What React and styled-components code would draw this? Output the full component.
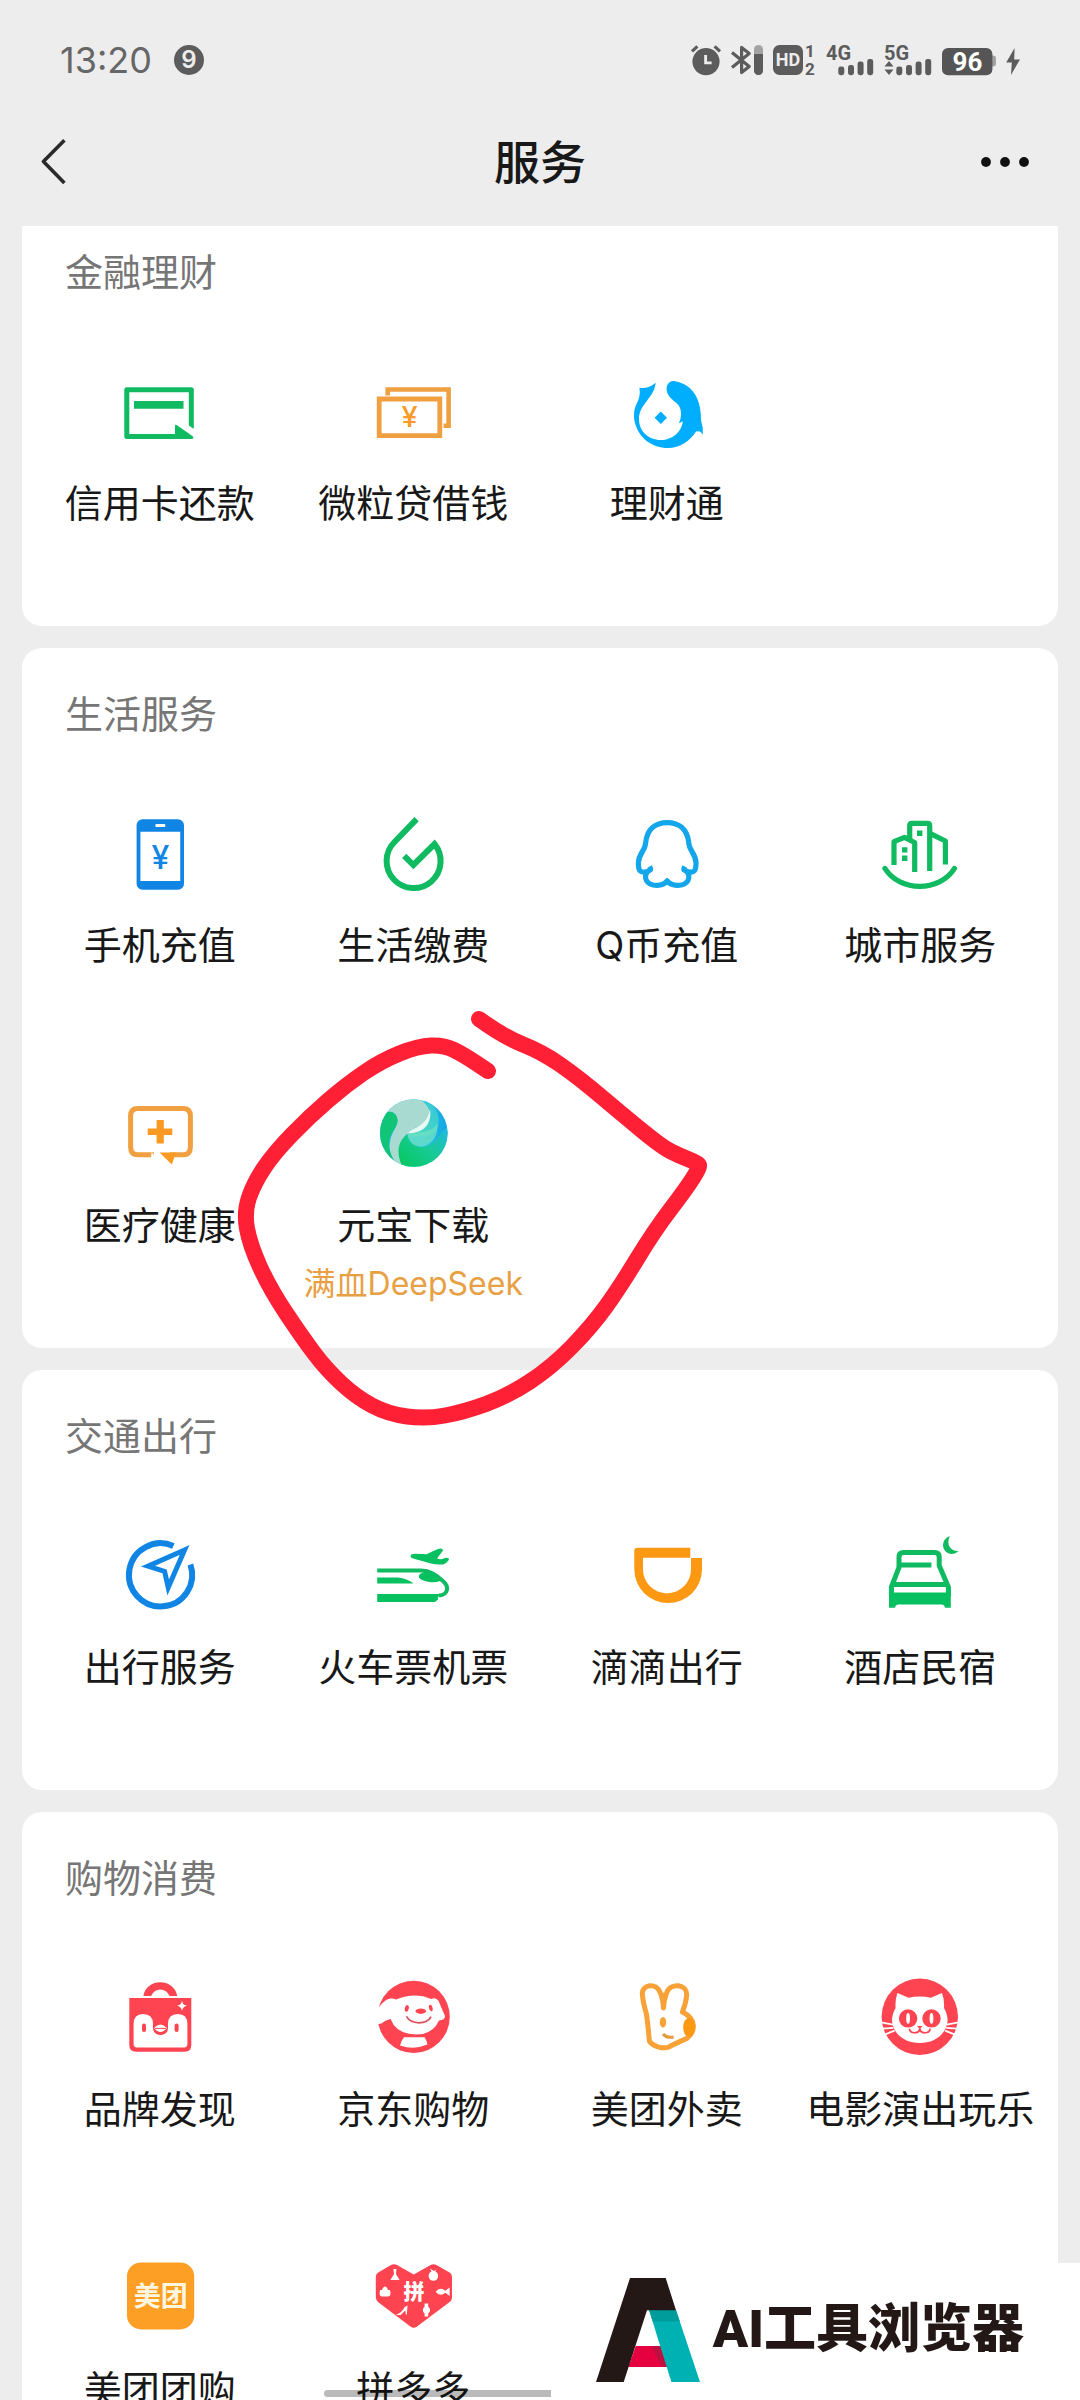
import React from 'react'
import styled, { createGlobalStyle } from 'styled-components'

const GREEN = '#0fba60'
const ORANGE = '#f0a040'
const BLUE = '#1085e4'
const RED = '#fd4450'
const GREY = '#5c5c5c'

const GlobalStyle = createGlobalStyle`
  * {
    box-sizing: border-box;
  }
  body {
    margin: 0;
    background: #ededed;
    font-family: Inter, "Noto Sans CJK SC", sans-serif;
    color: #181818;
  }
  h1, h2, ul {
    margin: 0;
    padding: 0;
  }
`

const Screen = styled.div`
  height: 100vh;
  overflow: hidden;
  display: flex;
  flex-direction: column;
`

const Header = styled.header`
  position: relative;
  z-index: 1;
  flex: none;
  background: #ededed;
`

const StatusBar = styled.div`
  display: flex;
  align-items: center;
  justify-content: space-between;
  height: 98px;
  padding: 22px 60px 0;
  color: ${GREY};
`

const StatusGroup = styled.div`
  display: flex;
  align-items: center;
  gap: ${(props) => props.$gap}px;
  svg {
    display: block;
    overflow: visible;
  }
`

const Clock = styled.time`
  font-size: 36px;
  line-height: 44px;
  color: #666;
`

const Count = styled.span`
  width: 30px;
  height: 30px;
  border-radius: 50%;
  background: ${GREY};
  color: #ededed;
  font-size: 24px;
  font-weight: 600;
  line-height: 30px;
  text-align: center;
`

const NavBar = styled.nav`
  display: grid;
  grid-template-columns: 1fr auto 1fr;
  align-items: center;
  height: 128px;
  padding: 0 40px;
`

const NavButton = styled.button`
  display: flex;
  justify-self: ${(props) => props.$side};
  padding: 0;
  border: 0;
  background: none;
  cursor: pointer;
`

const Title = styled.h1`
  font-size: 46px;
  font-weight: 500;
  line-height: 60px;
`

const List = styled.main`
  display: flex;
  flex-direction: column;
  gap: 22px;
  margin-top: -20px;
  padding: 0 22px;
`

const Card = styled.section`
  flex: none;
  padding: 40px 11px 0;
  border-radius: 20px;
  background: #fff;
`

const CardTitle = styled.h2`
  margin: 0 32px 48px;
  font-size: 38px;
  font-weight: 400;
  line-height: 52px;
  color: #767676;
`

const Grid = styled.ul`
  display: grid;
  grid-template-columns: repeat(4, 1fr);
  list-style: none;
`

const Cell = styled.li`
  position: relative;
  height: 280px;
  padding-top: 24px;
`

const Service = styled.a`
  display: flex;
  flex-direction: column;
  align-items: center;
  color: inherit;
  text-decoration: none;
  white-space: nowrap;
`

const Icon = styled.svg`
  width: 80px;
  height: 80px;
  margin-bottom: 27px;
  overflow: visible;
`

const Label = styled.span`
  font-size: 38px;
  line-height: 52px;
`

const Note = styled.span`
  margin-top: 11px;
  font-size: 32px;
  line-height: 44px;
  color: #e8a044;
`

const Scribble = styled.svg`
  position: absolute;
  top: -63px;
  left: 50%;
  width: 480px;
  height: 425px;
  margin-left: -183px;
  pointer-events: none;
`

const HomeIndicator = styled.div`
  position: fixed;
  bottom: 3px;
  left: 30%;
  width: 40%;
  height: 7px;
  border-radius: 4px;
  background: rgba(0, 0, 0, 0.27);
`

const Watermark = styled.footer`
  position: fixed;
  right: 0;
  bottom: 0;
  display: flex;
  align-items: center;
  gap: 13px;
  width: 49%;
  height: 137px;
  padding: 0 0 3px 45px;
  background: #fff;
`

const Brand = styled.span`
  font-family: Roboto, "Noto Sans CJK SC", sans-serif;
  font-size: 52px;
  font-weight: 900;
  line-height: 60px;
  color: #231815;
  white-space: nowrap;
`

const CreditCard = () => (
  <>
    <path d="M71.3 58.5 V19.8 H6.8 V66.5 H60" fill="none" stroke={GREEN} strokeWidth="5" strokeLinejoin="round" />
    <path d="M14 31 H63.5 V38.7 H14Z" fill={GREEN} />
    <path d="M55 69 V56 Q55 54 57 55.2 L72.4 66 Q75 69 71 69Z" fill={GREEN} />
    <path d="M67 54 L76 61 V64 L66 57Z" fill="#fff" />
  </>
)

const Loan = () => (
  <>
    <path d="M14.7 25.5 V19.5 H75.6 V55.8 H70.5" fill="none" stroke={ORANGE} strokeWidth="4.6" />
    <path d="M6.2 29 H66.8 V65.7 H6.2Z" fill="none" stroke={ORANGE} strokeWidth="4.8" />
    <text x="36.5" y="57" fill="#fa9b28" fontFamily="Inter" fontSize="29" fontWeight="500" textAnchor="middle">¥</text>
  </>
)

const Wealth = () => (
  <>
    <path
      d="M28.6 12.7 Q22 18.8 12.4 17.8 Q14 26 9.5 34 C6.5 40 6.5 48 8 53 C12 68 25 78 41 78 C53 78 63 71 69 61.5 Q74 60 75.8 65 Q76.5 58 74 50 C74.5 30 66 14 48 11.2 C40 10 37 19 42 26 C46 32 54 33 54 43 Q54 50 51.7 52.7 Q54 53 55.8 51 C55 62 45 70 34 70 C21 70 12 61 12 49 C12 34 28 27 28.6 12.7Z"
      fill="#00aefd"
    />
    <path d="M33.8 41.5 L40 47.7 L33.8 54 L27.6 47.7Z" fill="#00aefd" />
  </>
)

const Phone = () => (
  <>
    <rect x="16.6" y="7.3" width="47.4" height="70.4" rx="6" fill={BLUE} />
    <path d="M20.4 19.7 H60.2 V69 H20.4Z" fill="#fff" />
    <rect x="35.3" y="12" width="10" height="3" rx="1" fill="#fff" />
    <text x="40.3" y="57" fill={BLUE} fontFamily="Inter" fontSize="32" fontWeight="500" textAnchor="middle">¥</text>
  </>
)

const Drop = () => (
  <path d="M43.6 7.2 L21.5 30 A27 27 0 1 0 61.5 32 L40.4 53 L31.2 43.8" fill="none" stroke={GREEN} strokeWidth="6" />
)

const Penguin = () => (
  <g fill="none" stroke="#14a6ea" strokeWidth="5.2" strokeLinejoin="round">
    <path d="M22.6 54.5 Q24 57 23.4 58 C11.4 64 11.4 56 11.4 51 C11.6 41 18.4 39 18.6 31 C20 17 28.5 10.6 40.2 10.6 C52 10.6 60.4 17 61.8 31 C62 39 68.8 41 69 51 C69 56 69 64 57 58 Q56.4 57 57.8 54.5" />
    <path d="M21.6 58.5 C15.4 65 19 73.4 30 73.4 Q37 73 40.2 68.8 Q43.4 73 50.4 73.4 C61.4 73.4 65 65 58.8 58.5" />
  </g>
)

const City = () => (
  <>
    <g fill="none" stroke={GREEN} strokeWidth="5.2" strokeLinejoin="round">
      <path d="M14 53 V29.7 L24.5 25.4 L34.7 30.5 V60" />
      <path d="M29.7 27 V13.5 Q29.7 11.3 32 11.3 H47.4 Q49.7 11.3 49.7 13.5 V59" />
      <path d="M51 21.8 L65.4 29 V52.5" />
      <path d="M4.9 56.4 C20 80.4 59.5 80.4 74.5 56.4" strokeLinecap="round" />
    </g>
    <path d="M37 18.5 H42.4 V24 H37Z M22 35.3 H27.4 V40.6 H22Z M22 43.6 H27.4 V49 H22Z" fill={GREEN} />
  </>
)

const Medical = () => (
  <>
    <path d="M34 62.8 H18 Q10.6 62.8 10.6 55 V24 Q10.6 16.6 18 16.6 H63 Q70.4 16.6 70.4 24 V55 Q70.4 62.8 63 62.8 H50" fill="none" stroke={ORANGE} strokeWidth="5" />
    <path d="M31.5 60 L36.5 66 H31Z" fill="#fff" />
    <path d="M39.5 60.4 H56 L51.8 72.6Z M36.6 28 H43.8 V36.4 H52.3 V43 H43.8 V51.4 H36.6 V43 H27.7 V36.4 H36.6Z" fill="#fb9a22" />
  </>
)

const Yuanbao = () => (
  <>
    <defs>
      <clipPath id="yb-clip"><circle cx="40.8" cy="41" r="33.8" /></clipPath>
      <linearGradient id="yb-base" x1="0" y1="0" x2="1" y2="0">
        <stop offset="0" stopColor="#16b4e4" />
        <stop offset="0.6" stopColor="#2cc5de" />
        <stop offset="1" stopColor="#0d9fe8" />
      </linearGradient>
      <linearGradient id="yb-bottom" x1="0.1" y1="0.9" x2="1" y2="0.1">
        <stop offset="0" stopColor="#07c660" />
        <stop offset="0.5" stopColor="#17cb94" />
        <stop offset="1" stopColor="#22b8e0" />
      </linearGradient>
      <linearGradient id="yb-light" x1="0" y1="1" x2="1" y2="0">
        <stop offset="0" stopColor="#4fdcb4" />
        <stop offset="1" stopColor="#35c6dc" />
      </linearGradient>
    </defs>
    <g clipPath="url(#yb-clip)">
      <path d="M0 0 H80 V80 H0Z" fill="url(#yb-base)" />
      <path d="M10 10 C30 -4 54 6 57 20 C58 34 38 34 35 42 C25 50 24 62 34 78 C22 76 14 62 17 50 C18 40 26 34 24 26 C22 18 14 18 8 24Z" fill="#a9dad2" />
      <path d="M6 28 C10 16 24 18 24.6 28 C25 36 16 40 16 51 C16 60 20 68 25 73 C12 66 4 50 6 28Z" fill="#10c478" />
      <path d="M52 8 C64 13 68 26 64.5 36 C60 48 42 42 34.5 46 C36 34 56 36 57 20Z" fill="url(#yb-light)" />
      <path d="M57 17 C59 30 53 41 35 41.4 C38 35 54 36 57 17Z" fill="#e8f8f3" />
      <path d="M34 42 C36 54 50 60 61 50 C68 43 72 34 78 34 V80 H32 C24 66 22 52 34 42Z" fill="url(#yb-bottom)" />
      <path d="M35 42 C42 40 58 42 64 32 C66 44 58 54 48 54.6 C40 54.6 35 49 35 42Z" fill="#6fe0c4" opacity="0.75" />
    </g>
  </>
)

const Navigate = () => (
  <g fill="none" stroke={BLUE}>
    <path d="M53.4 12 A31.6 31.6 0 1 0 70.4 30.5" strokeWidth="6" />
    <path d="M64.6 16 L28 32.2 L44.6 37.4 L48.2 53.4Z" strokeWidth="5" strokeMiterlimit="8" />
  </g>
)

const Train = () => (
  <>
    <path d="M37.6 22 Q38 19.8 42 19.8 L53.6 20.2 Q60 17 65 15 Q70 13.6 70 16.6 L64 24.4 Q68 26 71 24.2 Q76.6 23 75.8 26 Q73.6 29.6 70 30.4 Q64 31 58 29.6 L41 24.8 Q37.4 24 37.6 22Z" fill="#07c160" />
    <path d="M4.2 36.4 H48 C58 36.4 64 42 69.4 46.6 C77 53 75 60.6 66 61.6" fill="none" stroke={GREEN} strokeWidth="4" />
    <path d="M46 43.4 Q45.4 40 49 39 L58 38.4 L68 46.4 Q62 49.4 55 47.8 Q48 46.4 46 43.4Z M4.2 43.4 H25 Q34 44.4 40.6 49.6 H4.2Z M4.2 60 H69 Q64 62 65 65.6 L62 68 H4.2Z" fill="#07c160" />
  </>
)

const Didi = () => (
  <path d="M10.4 13.7 H63.3 V23.7 H16 V35.4 A24 24 0 0 0 64 35.4 V24 H75 V35.2 A33.8 33.8 0 0 1 7.3 35.2 V16.6 Q7.3 13.7 10.4 13.7Z" fill="#fd9813" />
)

const Hotel = () => (
  <>
    <g fill="none" stroke={GREEN} strokeWidth="5" strokeLinejoin="round">
      <path d="M11.4 62 V53 L19 33.4 V23 Q19 18.6 23.6 18.6 H54.6 Q59.2 18.6 59.2 23 V31.4 L68.4 53 V62" />
      <path d="M20 31 H51.4 M13 50.6 H67" />
    </g>
    <path d="M9 54 H14 L13.6 58.6 H66.4 L66 54 H70.8 V73.8 H65 Q64.6 70.6 61 70.6 H19 Q15.4 70.6 15 73.8 H9Z" fill="#07c160" />
    <path d="M69.8 2 C66 10 70 17.4 78.6 17 C72 23.4 63 18.6 63 11 Q63.4 4.6 69.8 2Z" fill={GREEN} />
  </>
)

const Bag = () => (
  <>
    <path d="M23.4 20 C26 1.6 54.4 1.6 57.2 20 H49.6 Q46.6 13.4 40.3 13.4 Q34 13.4 31 20Z M9.3 22 H71.3 V69 Q71.3 75.8 64.6 75.8 H16 Q9.3 75.8 9.3 69Z" fill={RED} />
    <path d="M13.6 48 Q13.6 38 23 38 Q33 38 33 48 V52 C33 61.4 48 61.4 48 52 V48 Q48 38 58 38 Q67.4 38 67.4 48 V68 Q67.4 71.4 64 71.4 H17 Q13.6 71.4 13.6 68Z M62 24.4 Q62.6 29 67.2 29.7 Q62.6 30.4 62 35 Q61.4 30.4 56.8 29.7 Q61.4 29 62 24.4Z" fill="#fff" />
    <path d="M34 52 Q40.4 45 47 52 Q40.4 60 34 52Z" fill="#fff" />
    <path d="M35 52.4 H46" stroke={RED} strokeWidth="1" />
    <rect x="22" y="47.6" width="4" height="8.4" rx="2" fill={RED} />
    <rect x="54.6" y="47.6" width="4" height="8.4" rx="2" fill={RED} />
  </>
)

const Dog = () => (
  <>
    <circle cx="40.7" cy="40.8" r="36.1" fill={RED} />
    <path d="M3 36 Q10 24 17 22.6 Q20 22 23 23.4 Q42 16 58 23 Q63 20.6 65.6 25 L72 40 Q72 44 66 44.6 Q60 58.6 43 58.6 Q23 58 17.6 43 Q12 44 8.4 47.6 L3.6 48.6Z" fill="#fff" />
    <path d="M31 61.2 H51.6 Q54 65 54.4 68.6 Q41 74.4 27 69.4 Q28 65 31 61.2Z" fill="#fff" />
    <ellipse cx="33.8" cy="32.4" rx="2" ry="3.3" transform="rotate(12 33.8 32.4)" fill={RED} />
    <ellipse cx="57.8" cy="32" rx="1.8" ry="3.3" transform="rotate(-12 57.8 32)" fill={RED} />
    <ellipse cx="47.8" cy="35.2" rx="5.2" ry="2.7" fill={RED} />
    <path d="M33.4 40.4 Q37 46.6 45.8 46.8 Q55 46.6 58 40.6" fill="none" stroke="#d9525c" strokeWidth="1.8" />
  </>
)

const Rabbit = () => (
  <>
    <path
      d="M15.4 19 C14 8 30 6 33.4 17 Q36.6 26 36.4 32 Q37 24 39.6 17 C43 6 61 8 59.6 19.6 Q59 27 55.4 36 C68 42 70 54 60 62.4 C54 65 46 68.6 42 71 C36 73.4 25 70 22.4 65 C21.4 56 21 48 19.4 38 Q16 26 15.4 19Z"
      fill="none" stroke="#f7a136" strokeWidth="5" strokeLinejoin="round"
    />
    <path d="M36.4 16 L39 20 V30 L36.4 34 L34 28Z" fill="#f7a136" />
    <ellipse cx="62" cy="51.4" rx="5.8" ry="9.6" fill="#fd9813" />
    <ellipse cx="36" cy="46.3" rx="3.2" ry="5.2" fill="#f7a136" />
    <path d="M36 58 Q39.6 62.4 46.6 61" fill="none" stroke="#e59a3c" strokeWidth="3" />
  </>
)

const Cat = () => (
  <>
    <circle cx="39.8" cy="40.8" r="38.2" fill={RED} />
    <path d="M17.4 17 L28.6 21.8 Q40 19.4 50.8 21.8 L62 17 Q64.6 24 64 32 Q67.6 38 67.6 45 C66 59 54 67 39.8 67 C25.6 67 13.4 59 12 45 Q12 38 15.6 32 Q15 24 17.4 17Z" fill="#fff" />
    <path d="M1 46.4 L13 48.6 M2 52.6 L13.4 51.8 M4.6 58.6 L14.6 54.6 M78.6 46.4 L66.6 48.6 M77.6 52.6 L66.2 51.8 M75 58.6 L65 54.6" stroke="#fff" strokeWidth="1.8" />
    <circle cx="28.1" cy="42.4" r="9.2" fill={RED} />
    <circle cx="51.5" cy="42.4" r="9.2" fill={RED} />
    <ellipse cx="28.1" cy="42.4" rx="1.9" ry="5.4" fill="#fff" />
    <ellipse cx="51.5" cy="42.4" rx="1.9" ry="5.4" fill="#fff" />
    <path d="M37 50 H42.6 L39.8 53Z" fill={RED} />
    <path d="M29.4 52.6 C30 58 39.4 58.4 39.8 52.4 C40.2 58.4 49.6 58 50.2 52.6" fill="none" stroke={RED} strokeWidth="1.7" />
  </>
)

const Meituan = () => (
  <>
    <rect x="7" y="6.4" width="67.2" height="67" rx="14" fill="#fd9f24" />
    <text x="40.7" y="50" fill="#fff6df" fontFamily="Noto Sans CJK SC" fontSize="27" fontWeight="700" textAnchor="middle">美团</text>
  </>
)

const Pinduoduo = () => (
  <>
    <path d="M18 9 Q21 7.4 24 9 L40.7 18.4 L57.6 9 Q60.4 7.4 63.4 9 L76.6 16.6 Q79 18 79 21 V41 Q79 44.6 76 46.6 L44 70.4 Q40.7 73 37.4 70.4 L5.6 46.6 Q2.8 44.6 2.8 41 V21 Q2.8 18 5.2 16.6Z" fill={RED} />
    <text x="41" y="43" fill="#fff" fontFamily="Noto Sans CJK SC" fontSize="21" fontWeight="900" textAnchor="middle">拼</text>
    <g fill="#fff">
      <path d="M20.4 13 H23.4 L23 18 L26.6 24 H17.4 L21 18Z" />
      <circle cx="60.4" cy="20" r="4.8" />
      <path d="M57 12.6 L61 15 L63 13.4 L62 16.4 H59Z" />
      <path d="M7 34 H9 Q10 30.4 12 30.4 Q14 30.4 15 34 H17 Q18.6 40.4 15 40.6 H9 Q5.6 40.4 7 34Z" />
      <path d="M62.6 35.8 Q67 30.4 72.4 34.8 L76.6 31.6 V40 L72.4 36.8 Q67 41.2 62.6 35.8Z" />
      <path d="M34.6 49.6 L33.8 58.6 H32.8 L32.4 54.4 L27.6 59 H22.8 Q29.6 56 31.6 51Z" />
      <path d="M51.6 47.4 H55.2 V50.4 Q59 54 55.2 57.6 V60.6 H51.6 V57.6 Q48 54 51.6 50.4Z" />
    </g>
  </>
)

const sections = [
  {
    title: '金融理财',
    items: [
      { name: '信用卡还款', icon: CreditCard },
      { name: '微粒贷借钱', icon: Loan },
      { name: '理财通', icon: Wealth },
    ],
  },
  {
    title: '生活服务',
    items: [
      { name: '手机充值', icon: Phone },
      { name: '生活缴费', icon: Drop },
      { name: 'Q币充值', icon: Penguin },
      { name: '城市服务', icon: City },
      { name: '医疗健康', icon: Medical },
      { name: '元宝下载', icon: Yuanbao, note: '满血DeepSeek', circled: true },
    ],
  },
  {
    title: '交通出行',
    items: [
      { name: '出行服务', icon: Navigate },
      { name: '火车票机票', icon: Train },
      { name: '滴滴出行', icon: Didi },
      { name: '酒店民宿', icon: Hotel },
    ],
  },
  {
    title: '购物消费',
    items: [
      { name: '品牌发现', icon: Bag },
      { name: '京东购物', icon: Dog },
      { name: '美团外卖', icon: Rabbit },
      { name: '电影演出玩乐', icon: Cat },
      { name: '美团团购', icon: Meituan },
      { name: '拼多多', icon: Pinduoduo },
    ],
  },
]

const strokePoints = [
  [249, 14], [274, 32], [312, 47], [348, 72], [393, 110], [432, 142], [450, 151],
  [468, 158], [470, 162], [456, 184], [424, 226], [390, 282], [362, 321], [322, 362],
  [278, 391], [234, 407], [196, 414], [158, 409], [126, 392], [96, 364], [72, 332],
  [40, 284], [20, 240], [14, 207], [24, 178], [44, 148], [80, 111], [116, 80],
  [151, 56], [188, 41], [214, 40], [234, 50], [258, 66],
]

// runs a quadratic curve through the midpoints, so the line has no kinks
const smoothPath = (points) => {
  const [first, ...rest] = points
  const last = rest[rest.length - 1]
  const curves = rest.slice(0, -1).map(([x, y], i) => {
    const [nx, ny] = rest[i + 1]
    return `Q${x} ${y} ${(x + nx) / 2} ${(y + ny) / 2}`
  })
  return `M${first.join(' ')} ${curves.join(' ')} L${last.join(' ')}`
}

const HandDrawnCircle = () => (
  <Scribble viewBox="0 0 480 425" aria-hidden="true">
    <path
      d={smoothPath(strokePoints)}
      fill="none" stroke="#ff2036" strokeWidth="16" strokeLinecap="round" strokeLinejoin="round"
    />
  </Scribble>
)

const Signal = ({ label, arrows }) => (
  <svg width="48" height="32" viewBox="0 0 48 32" fill={GREY}>
    <text x="0" y="16" fontFamily="Roboto" fontSize="20" fontWeight="700">{label}</text>
    <rect x="12.3" y="22.6" width="6" height="8.6" rx="2.4" />
    <rect x="22" y="21" width="6" height="10.2" rx="2.4" />
    <rect x="31.6" y="17.6" width="6" height="13.6" rx="2.4" />
    <rect x="41.2" y="15" width="6" height="16.2" rx="2.4" />
    {arrows && <path d="M0.5 22.6 L5 17 L9.5 22.6Z M0.5 25.4 H9.5 L5 31Z" />}
  </svg>
)

const StatusIcons = () => (
  <StatusGroup $gap={10}>
    <svg width="30" height="32" viewBox="0 0 30 32" fill={GREY}>
      <circle cx="15" cy="17.6" r="13.6" />
      <path d="M1 7.4 L6.4 2.4 M29 7.4 L23.6 2.4" stroke={GREY} strokeWidth="3.2" />
      <path d="M14.6 11 V18.8 H20.6" fill="none" stroke="#ededed" strokeWidth="2.8" />
    </svg>
    <svg width="32" height="32" viewBox="0 0 32 32">
      <path d="M1 8.4 L18.2 22.4 L10.6 28.6 V3.4 L18.2 9.6 L1 23.6" fill="none" stroke={GREY} strokeWidth="3.2" strokeLinejoin="round" />
      <rect x="23" y="1" width="9" height="30" rx="4.5" fill="#a2a2a2" />
      <path d="M23 10 H32 V26.5 A4.5 4.5 0 0 1 23 26.5Z" fill={GREY} />
    </svg>
    <svg width="43" height="32" viewBox="0 0 43 32" fill={GREY}>
      <rect x="0" y="1" width="30" height="30" rx="6.5" />
      <text x="15" y="22.4" fill="#ededed" fontFamily="Roboto" fontSize="18" fontWeight="700" textAnchor="middle">HD</text>
      <text x="37" y="13.4" fontFamily="Roboto" fontSize="17" fontWeight="700" textAnchor="middle">1</text>
      <text x="37" y="30.6" fontFamily="Roboto" fontSize="17" fontWeight="700" textAnchor="middle">2</text>
    </svg>
    <Signal label="4G" />
    <Signal label="5G" arrows />
    <svg width="54" height="32" viewBox="0 0 54 32">
      <path d="M48 11.4 H51 Q54 11.4 54 14.4 V19.6 Q54 22.6 51 22.6 H48Z" fill="#a2a2a2" />
      <rect x="0" y="4" width="50.4" height="27.2" rx="6" fill="#555" />
      <text x="25.4" y="26.6" fill="#fff" fontFamily="Roboto" fontSize="26" fontWeight="700" textAnchor="middle">96</text>
    </svg>
    <svg width="14" height="32" viewBox="0 0 14 32" fill={GREY}>
      <path d="M8.6 4 L0.2 18.6 H5.8 L5 31 L14 15.4 H8.2Z" />
    </svg>
  </StatusGroup>
)

const ServiceCard = ({ title, items }) => (
  <Card>
    <CardTitle>{title}</CardTitle>
    <Grid>
      {items.map(({ name, icon: Drawing, note, circled }) => (
        <Cell key={name}>
          <Service href="#">
            <Icon viewBox="0 0 80 80" aria-hidden="true"><Drawing /></Icon>
            <Label>{name}</Label>
            {note && <Note>{note}</Note>}
          </Service>
          {circled && <HandDrawnCircle />}
        </Cell>
      ))}
    </Grid>
  </Card>
)

const App = () => {
  return (
    <Screen>
      <GlobalStyle />
      <Header>
        <StatusBar>
          <StatusGroup $gap={22}>
            <Clock>13:20</Clock>
            <Count>9</Count>
          </StatusGroup>
          <StatusIcons />
        </StatusBar>
        <NavBar>
          <NavButton type="button" $side="start" aria-label="返回">
            <svg width="28" height="50" viewBox="0 0 28 50">
              <path d="M24.4 3.2 L3.4 24.6 L24.4 46" fill="none" stroke="#2a2a2a" strokeWidth="3.6" strokeLinejoin="round" />
            </svg>
          </NavButton>
          <Title>服务</Title>
          <NavButton type="button" $side="end" aria-label="更多">
            <svg width="60" height="12" viewBox="0 0 60 12" fill="#111">
              <circle cx="6" cy="6" r="4.9" />
              <circle cx="25" cy="6" r="4.9" />
              <circle cx="44" cy="6" r="4.9" />
            </svg>
          </NavButton>
        </NavBar>
      </Header>
      <List>
        {sections.map((section) => (
          <ServiceCard key={section.title} {...section} />
        ))}
      </List>
      <HomeIndicator />
      <Watermark>
        <svg width="104" height="104" viewBox="0 0 104 104" aria-hidden="true">
          <path d="M39.7 68 H64.6 L71.6 89 H32.3Z" fill="#e6003f" />
          <path d="M56 68 H64.6 L71.6 89 H67 L60.4 79Z" fill="#bb1040" />
          <path d="M53 32 H80 L104 104 H75.4Z" fill="#00b1b4" />
          <path d="M53 32 H80 L83.8 43.4 H56.8Z" fill="#009c9b" />
          <path d="M34 0 H69.7 L80 32.2 H51 L27.7 104 H0Z" fill="#231815" />
        </svg>
        <Brand>AI工具浏览器</Brand>
      </Watermark>
    </Screen>
  )
}

export default App
